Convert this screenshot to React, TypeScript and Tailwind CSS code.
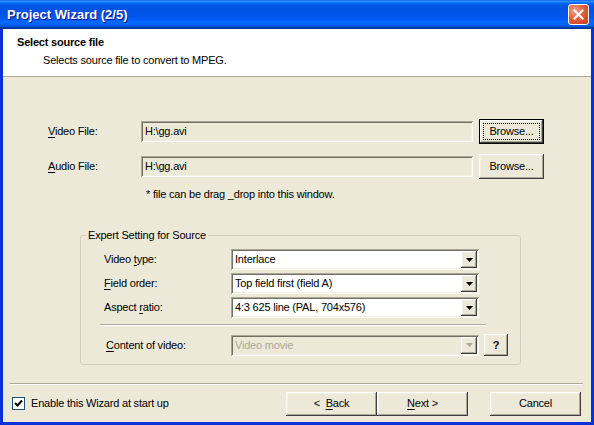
import type { ReactNode } from 'react';

// classic 3D edges
const raised =
    'shadow-[inset_-1px_-1px_#404040,inset_1px_1px_#ffffff,inset_-2px_-2px_#aca899,inset_2px_2px_#f1efe2]';
const sunken =
    'shadow-[inset_1px_1px_#aca899,inset_-1px_-1px_#ffffff,inset_2px_2px_#716f64,inset_-2px_-2px_#f1efe2]';

function Button({ children, focused, className = '' }: { children: ReactNode; focused?: boolean; className?: string }) {
    if (focused) {
        return (
            <div className={`border border-black bg-[#ece9d8] ${className}`}>
                <div className={`flex h-full w-full items-center justify-center p-[3px] ${raised}`}>
                    <div className="flex h-full w-full items-center justify-center border border-dotted border-black">
                        {children}
                    </div>
                </div>
            </div>
        );
    }
    return (
        <div className={`flex items-center justify-center bg-[#ece9d8] ${raised} ${className}`}>
            {children}
        </div>
    );
}

function Arrow({ disabled }: { disabled?: boolean }) {
    return (
        <div className={`flex h-full w-[16px] items-center justify-center bg-[#ece9d8] ${raised}`}>
            <svg width="7" height="4" viewBox="0 0 7 4">
                <path d="M0 0h7L3.5 4z" fill={disabled ? '#aca899' : '#000'} />
            </svg>
        </div>
    );
}

function FileInput({ value }: { value: string }) {
    return (
        <div className={`flex h-[21px] w-[332px] items-center bg-[#ece9d8] px-[4px] ${sunken}`}>
            {value}
        </div>
    );
}

function Combo({ value, disabled }: { value: string; disabled?: boolean }) {
    return (
        <div className={`flex h-[21px] w-[248px] p-[2px] ${disabled ? 'bg-[#ece9d8]' : 'bg-white'} ${sunken}`}>
            <div className={`flex flex-1 items-center pl-[2px] ${disabled ? 'text-[#aca899]' : ''}`}>{value}</div>
            <Arrow disabled={disabled} />
        </div>
    );
}

const U = ({ children }: { children: ReactNode }) => (
    <span className="underline underline-offset-[2px]">{children}</span>
);

const fields = [
    { label: <>Video <U>t</U>ype:</>, value: 'Interlace' },
    { label: <><U>F</U>ield order:</>, value: 'Top field first (field A)' },
    { label: <>Aspect <U>r</U>atio:</>, value: '4:3 625 line (PAL, 704x576)' },
];

export default function App() {
    return (
        <div className="flex h-[425px] w-[594px] flex-col bg-[#0831d9] font-['Liberation_Sans',Arial,sans-serif] text-[11px] leading-[13px] tracking-[-0.2px] text-black">

            {/* Title bar */}
            <div className="flex h-[29px] shrink-0 items-center justify-between bg-[linear-gradient(to_bottom,#0058ee_0%,#3593ff_4%,#288eff_6%,#127dff_8%,#036ffc_10%,#0262ee_14%,#0057e5_20%,#0054e3_24%,#0055eb_56%,#005bf5_66%,#026afe_76%,#0062ef_86%,#0052d6_92%,#0040ab_94%,#003092_100%)] pl-[7px] pr-[5px]">
                <span className="text-[13px] font-bold tracking-normal text-white [text-shadow:1px_1px_#0f1089]">Project Wizard (2/5)</span>
                <div className="flex h-[21px] w-[21px] items-center justify-center rounded-[3px] border border-white bg-[radial-gradient(circle_at_30%_30%,#f0a58c,#e0613f_45%,#c4391c)]">
                    <svg width="11" height="11" viewBox="0 0 11 11">
                        <path d="M1.5 1.5l8 8M9.5 1.5l-8 8" stroke="#fff" strokeWidth="2" strokeLinecap="square" />
                    </svg>
                </div>
            </div>

            <div className="mx-[3px] mb-[3px] flex flex-1 flex-col bg-[#ece9d8]">

                {/* Header */}
                <div className="h-[48px] shrink-0 border-b border-[#aca899] bg-white pl-[14px] pt-[7px]">
                    <div className="font-bold">Select source file</div>
                    <div className="mt-[5px] pl-[26px]">Selects source file to convert to MPEG.</div>
                </div>

                {/* Body */}
                <div className="flex-1 pl-[45px] pt-[42px]">
                    <div className="flex h-[25px] items-center">
                        <div className="w-[93px]"><U>V</U>ideo File:</div>
                        <FileInput value="H:\gg.avi" />
                        <Button focused className="ml-[6px] h-[25px] w-[65px]">Browse...</Button>
                    </div>
                    <div className="mt-[10px] flex h-[25px] items-center">
                        <div className="w-[93px]"><U>A</U>udio File:</div>
                        <FileInput value="H:\gg.avi" />
                        <Button className="ml-[6px] h-[25px] w-[65px]">Browse...</Button>
                    </div>
                    <div className="mt-[9px] pl-[98px]">* file can be drag _drop into this window.</div>

                    <fieldset className="ml-[32px] mt-[28px] w-[441px] rounded-[3px] border border-[#d0d0bf] pb-[8px]">
                        <legend className="ml-[5px] px-[2px]">Expert Setting for Source</legend>
                        <div className="pl-[23px]">
                            <div className="flex flex-col gap-[3px] pt-[7px]">
                                {fields.map((f, i) => (
                                    <div key={i} className="flex items-center">
                                        <div className="w-[127px]">{f.label}</div>
                                        <Combo value={f.value} />
                                    </div>
                                ))}
                            </div>
                            <div className="-ml-[4px] mt-[6px] w-[386px] border-t border-b border-t-[#aca899] border-b-white" />
                            <div className="mt-[8px] flex items-center">
                                <div className="w-[127px] pl-[2px]"><U>C</U>ontent of video:</div>
                                <Combo value="Video movie" disabled />
                                <Button className="ml-[5px] h-[22px] w-[24px] font-bold">?</Button>
                            </div>
                        </div>
                    </fieldset>
                </div>

                {/* Footer */}
                <div className="mx-[7px] mr-[8px] border-t border-b border-t-[#aca899] border-b-white" />
                <div className="flex h-[37px] shrink-0 items-center pl-[9px] pr-[10px]">
                    <div className="flex h-[13px] w-[13px] items-center justify-center border border-[#1c5180] bg-white">
                        <svg width="9" height="9" viewBox="0 0 9 9">
                            <path d="M1 4l2.5 2.5L8 1.5" stroke="#000" strokeWidth="2" fill="none" />
                        </svg>
                    </div>
                    <span className="ml-[6px]">Enable this Wizard at start up</span>
                    <div className="ml-auto flex">
                        <Button className="h-[24px] w-[91px]">&lt;&nbsp;&nbsp;<U>B</U>ack</Button>
                        <Button className="h-[24px] w-[91px]"><U>N</U>ext &gt;</Button>
                        <Button className="ml-[22px] h-[24px] w-[91px]">Cancel</Button>
                    </div>
                </div>
            </div>
        </div>
    );
}
